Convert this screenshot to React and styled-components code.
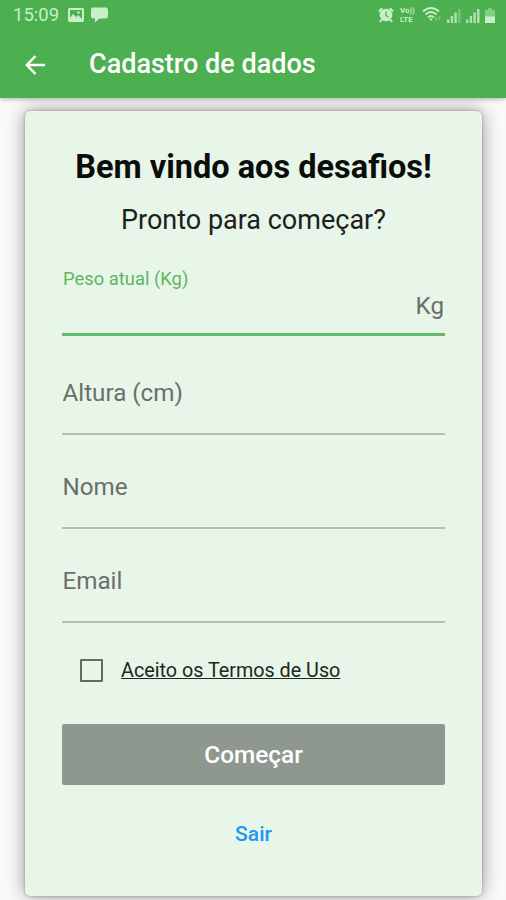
import React, { useState } from 'react';
import styled, { createGlobalStyle } from 'styled-components';

const GlobalStyle = createGlobalStyle`
    * {
        box-sizing: border-box;
    }
    body {
        margin: 0;
        background: #fafafa;
        font-family: Roboto, "Liberation Sans", sans-serif;
    }
`

const Screen = styled.div`
    display: flex;
    flex-direction: column;
    height: 900px;
    overflow: hidden;
    background: #fafafa;
`

const Header = styled.header`
    height: 98px;
    background: #4caf50;
    box-shadow: 0 1px 5px rgba(0, 0, 0, 0.3);
    flex-shrink: 0;
    z-index: 1;
`

const StatusBar = styled.div`
    display: flex;
    align-items: center;
    justify-content: space-between;
    height: 30px;
    padding: 0 11px 0 13px;
    color: #c8f0c6;
`

const StatusGroup = styled.div`
    display: flex;
    align-items: center;
    gap: ${props => props.$gap}px;
`

const Clock = styled.span`
    width: 48px;
    font-size: 18.5px;
    line-height: 30px;
    white-space: nowrap;
`

const AppBar = styled.div`
    display: flex;
    align-items: center;
    height: 67px;
    padding-left: 25px;
    color: #fff;
`

const BackButton = styled.button`
    display: flex;
    width: 21px;
    margin: 2px 43px 0 0;
    padding: 0;
    border: 0;
    background: none;
    color: inherit;
`

const Title = styled.h1`
    margin: 0;
    font-size: 27px;
    font-weight: 500;
    line-height: 32px;
    white-space: nowrap;
`

const Card = styled.main`
    height: 785px;
    margin: 13px 24px 0 25px;
    padding: 36px 37px 0;
    flex-shrink: 0;
    border-radius: 5px;
    background: #e8f5e9;
    box-shadow: 0 0 3px rgba(0, 0, 0, 0.3), 0 0 19px rgba(0, 0, 0, 0.4);
`

const Welcome = styled.h2`
    margin: 0;
    font-size: 32.5px;
    font-weight: 700;
    line-height: 40px;
    text-align: center;
    white-space: nowrap;
    color: #0a0d0a;
`

const Subtitle = styled.p`
    margin: 16px 0 0;
    font-size: 27px;
    line-height: 34px;
    text-align: center;
    white-space: nowrap;
    color: #1b211c;
`

const Field = styled.label`
    display: flex;
    flex-direction: column;
    justify-content: flex-end;
    height: ${props => props.$height}px;
    border-bottom: ${props => props.$focused ? '3px solid #66b86a' : '2px solid #b3bfb4'};
`

const FloatingLabel = styled.span`
    padding-left: 1px;
    font-size: 18.4px;
    line-height: 24px;
    color: #5cb760;
`

const InputRow = styled.span`
    display: flex;
    align-items: center;
    height: 30px;
    margin-bottom: ${props => props.$bottom}px;
`

const Input = styled.input`
    flex: 1;
    min-width: 0;
    height: 30px;
    padding: 0 0 0 0.5px;
    border: 0;
    outline: 0;
    background: transparent;
    color: #1b211c;
    font-family: inherit;
    font-size: 24.2px;
    &::placeholder {
        color: #697069;
        opacity: 1;
    }
`

const Suffix = styled.span`
    padding-right: 1px;
    font-size: 24.2px;
    line-height: 30px;
    color: #697069;
`

const Terms = styled.div`
    display: flex;
    align-items: center;
    height: 30px;
    margin: 32px 0 0 18px;
`

const Checkbox = styled.input`
    appearance: none;
    width: 23px;
    height: 23px;
    margin: 0 18px 0 0;
    border: 2px solid #626c63;
    border-radius: 1px;
    &:checked {
        background: #4caf50;
    }
`

const TermsLink = styled.a`
    padding-top: 2px;
    font-size: 19.75px;
    line-height: 28px;
    color: #202721;
    text-decoration: underline;
    text-decoration-thickness: 1px;
    text-underline-offset: 1px;
    white-space: nowrap;
`

const Actions = styled.div`
    display: flex;
    flex-direction: column;
    align-items: center;
    margin-top: 39px;
`

const SubmitButton = styled.button`
    width: 100%;
    height: 61px;
    padding: 0;
    border: 0;
    border-radius: 2px;
    background: #8f988f;
    color: #fff;
    font-family: inherit;
    font-size: 24.4px;
    font-weight: 500;
`

const ExitButton = styled.button`
    height: 36px;
    margin-top: 31px;
    padding: 0;
    border: 0;
    background: none;
    color: #2196f3;
    font-family: inherit;
    font-size: 21px;
    font-weight: 500;
`

const PictureIcon = () => (
    <svg width="16" height="14" viewBox="0 0 16 14">
        <path fill="currentColor" fillRule="evenodd" d="M1 0h14l1 1v12l-1 1H1l-1-1V1zM2 2v8l3-4 3 3 2-2 4 4V2z" />
        <circle cx="10.5" cy="4.5" r="1.3" fill="currentColor" />
    </svg>
)

const ChatIcon = () => (
    <svg width="17" height="16" viewBox="0 0 17 16">
        <path fill="currentColor" d="M1.5 0.5h14l1.500 1.500v8L15.500 11.500H8.500l-4.500 4V11.500H1.500L0 10V2z" />
    </svg>
)

const AlarmIcon = () => (
    <svg width="16" height="16" viewBox="0 0 16 16" fill="none">
        <circle cx="8" cy="8" r="6.3" fill="currentColor" />
        <path d="M0.800 4.500 4.300 1.200M15.200 4.500 11.700 1.200M3.500 12.500 2 15M12.500 12.500 14 15" stroke="currentColor" strokeWidth="2" />
        <path d="M8 4.500V8.500L10.500 10" stroke="#4caf50" strokeWidth="1.300" />
    </svg>
)

const VolteLabel = styled.span`
    display: flex;
    flex-direction: column;
    width: 17px;
    margin: 0 0 0 1px;
    font-size: 7.8px;
    font-weight: 700;
    line-height: 9px;
    white-space: nowrap;
`

const WifiIcon = () => (
    <svg width="20" height="16" viewBox="0 0 20 16" fill="none" stroke="currentColor" strokeWidth="1.800">
        <path d="M1 4.500Q9 -2.500 17 4.500M3.500 7.500Q9 2.500 14.500 7.500M6 10.300Q9 7.600 12 10.300" />
        <path d="M7.200 11.500h3.600L9 14z" fill="currentColor" stroke="none" />
        <path d="M14 10v4M17.500 9v4" strokeWidth="1.500" opacity="0.4" />
    </svg>
)

const SignalIcon = ({ level }) => (
    <svg width="14" height="15" viewBox="0 0 14 15" fill="currentColor">
        {[0, 1, 2, 3].map(bar => (
            <rect
                key={bar}
                x={bar * 3.7}
                y={11.5 - bar * 3.5}
                width="2.4"
                height={3.5 + bar * 3.5}
                opacity={bar < level ? 0.8 : 0.35}
            />
        ))}
    </svg>
)

const BatteryIcon = () => (
    <svg width="10" height="15" viewBox="0 0 10 15" fill="currentColor">
        <path d="M3 0h4v2h3v7H0V2h3z" opacity="0.45" />
        <path d="M0 8.500h10V15H0z" />
    </svg>
)

const ArrowIcon = () => (
    <svg width="21" height="20" viewBox="0 0 21 20" fill="none" stroke="currentColor" strokeWidth="2.500">
        <path d="M20 10H2.500M10.500 1 1.800 10 10.500 19" />
    </svg>
)

const fields = [
    { name: 'Altura (cm)', height: 99 },
    { name: 'Nome', height: 94 },
    { name: 'Email', height: 94 },
]

export default function App() {
    const [accepted, setAccepted] = useState(false)

    return (
        <Screen>
            <GlobalStyle />
            <Header>
                <StatusBar>
                    <StatusGroup $gap={7}>
                        <Clock>15:09</Clock>
                        <PictureIcon />
                        <ChatIcon />
                    </StatusGroup>
                    <StatusGroup $gap={5}>
                        <AlarmIcon />
                        <VolteLabel>
                            <span>Vo))</span>
                            <span>LTE</span>
                        </VolteLabel>
                        <WifiIcon />
                        <SignalIcon level={3} />
                        <SignalIcon level={4} />
                        <BatteryIcon />
                    </StatusGroup>
                </StatusBar>
                <AppBar>
                    <BackButton aria-label="Voltar"><ArrowIcon /></BackButton>
                    <Title>Cadastro de dados</Title>
                </AppBar>
            </Header>
            <Card>
                <Welcome>Bem vindo aos desafios!</Welcome>
                <Subtitle>Pronto para começar?</Subtitle>
                <Field $focused $height={99}>
                    <FloatingLabel>Peso atual (Kg)</FloatingLabel>
                    <InputRow $bottom={12}>
                        <Input type="text" />
                        <Suffix>Kg</Suffix>
                    </InputRow>
                </Field>
                {fields.map(({ name, height }) => (
                    <Field key={name} $height={height}>
                        <InputRow $bottom={25}>
                            <Input type="text" placeholder={name} />
                        </InputRow>
                    </Field>
                ))}
                <Terms>
                    <Checkbox type="checkbox" checked={accepted} onChange={() => setAccepted(!accepted)} />
                    <TermsLink>Aceito os Termos de Uso</TermsLink>
                </Terms>
                <Actions>
                    <SubmitButton>Começar</SubmitButton>
                    <ExitButton>Sair</ExitButton>
                </Actions>
            </Card>
        </Screen>
    )
}
